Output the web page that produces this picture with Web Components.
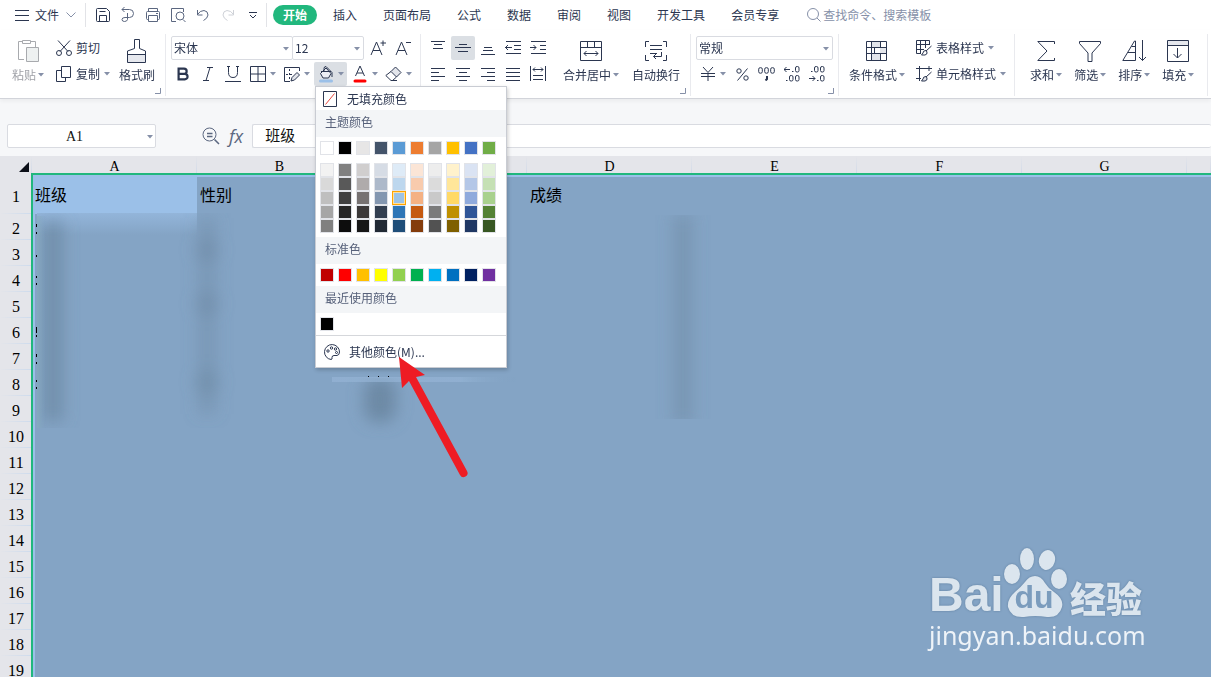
<!DOCTYPE html>
<html lang="zh-CN">
<head>
<meta charset="utf-8">
<meta name="viewport" content="width=device-width, initial-scale=1">
<title>表格</title>
<style>
  :root { --ink: #2b3650; --soft: #8690a8; --line: #d9dbe1; --green: #21b77d; --sel: #84a4c5; --cell: #9bc0e8; }
  body { margin: 0; font: 12px/16px "Noto Sans CJK SC", sans-serif; color: var(--ink); background: #f6f7f9; }
</style>
</head>
<body>
<sheet-app></sheet-app>
<script>
const define = (name, css, html) => customElements.define(name, class extends HTMLElement {
  connectedCallback() {
    if (this.shadowRoot) return;
    const root = this.attachShadow({ mode: 'open' });
    const tpl = document.createElement('template');
    tpl.innerHTML = `<style>*{box-sizing:border-box}button,input,select{font:inherit;color:inherit;background:none;border:0;margin:0;padding:0;border-radius:0;outline:0}${css}</style>` +
      (typeof html === 'function' ? html(this) : html);
    root.append(tpl.content.cloneNode(true));
  }
});

/* name: [width, height, markup] */
const ICONS = {
  menu: [14, 14, '<path d="M0 2.5H14M0 7.5H14M0 12.5H14"/>'],
  chevron: [10, 6, '<path stroke="#8690a8" d="M.5 .5L5 5L9.5 .5"/>'],
  save: [16, 16, '<path d="M1.500 2.500Q1.500 1.500 2.500 1.500H11.500L14.500 4.500V13.500Q14.500 14.500 13.500 14.500H2.500Q1.500 14.500 1.500 13.500ZM4.500 4.500H10.500M4.500 14.500V8.500H11.500V14.500"/>'],
  pdf: [16, 16, '<path stroke="#5b6780" d="M2 2.500H9.500A4 4 0 0 1 9.500 10.500H7.500M7.500 6V12.500Q7 14.500 4.500 14.500T2 12.500Q2 10.500 5 10.500H8M4.500 0L2 2.500L4.500 5"/>'],
  print: [16, 16, '<path stroke="#5b6780" d="M3.500 4.500V1.500H12.500V4.500M3.500 12.500H2.500Q1.500 12.500 1.500 11.500V5.500Q1.500 4.500 2.500 4.500H13.500Q14.500 4.500 14.500 5.500V11.500Q14.500 12.500 13.500 12.500H12.500M3.500 8.500H12.500V14.500H3.500ZM11 6.500H13"/>'],
  preview: [16, 16, '<path stroke="#5b6780" d="M6 14.500H1.500V1.500H13.500V5M13 12.500L15.500 15"/><circle stroke="#5b6780" cx="10" cy="9" r="4"/>'],
  undo: [16, 16, '<path stroke="#5b6780" d="M2.500 3V8H7.500M2.500 7.500Q5 3.500 9 3.500Q13 4 13 8Q12.500 11.500 8.500 13.500"/>'],
  redo: [16, 16, '<path stroke="#cfd2d8" d="M13.500 3V8H8.500M13.500 7.500Q11 3.500 7 3.500Q3 4 3 8Q3.500 11.500 7.500 13.500"/>'],
  more: [8, 8, '<path d="M0 1.500H8M1 4L4 7L7 4"/>'],
  search: [14, 14, '<circle stroke="#8690a8" cx="6" cy="6" r="5.500"/><path stroke="#8690a8" d="M10 10L13.500 13.500"/>'],
  paste: [22, 24, '<g stroke="#a8aaae"><path d="M7 20.500H1.500V2.500H5.500M14 2.500H18.500V8M5.500 1.500H13.500V4.500H5.500Z"/><path fill="#eef1f1" d="M9.500 8.500H21.500V22.500H9.500Z"/></g>'],
  cut: [16, 16, '<path d="M2 .5L12 11.500M14 .5L4 11.500"/><circle cx="3" cy="13" r="2.500"/><circle cx="13" cy="13" r="2.500"/>'],
  copy: [16, 16, '<path d="M5.500 .5H14.500V11.500H5.500ZM5.500 4.500H.5V15.500H9.500V11.500"/>'],
  brush: [20, 24, '<path fill="#e6e8ee" stroke="none" d="M1 15H18V23H1Z"/><path d="M7.500 .5H12.500V9.500L18.500 12V23.500H.5V12L7.500 9.500ZM.5 15.500H18.500"/>'],
  bold: [14, 16, '<path stroke-width="2.200" d="M2.600 2.600H8A2.600 2.600 0 0 1 8 7.900H2.600M2.600 7.900H8.800A2.700 2.700 0 0 1 8.800 13.400H2.600ZM2.600 1.500V14.500"/>'],
  italic: [12, 16, '<path d="M5 1.500H11M1 14.500H7M8 1.500L4 14.500"/>'],
  under: [16, 16, '<path d="M3.500 1V6.500Q3.500 11.500 8 11.500T12.500 6.500V1M0 15.500H16M2 .5H5M11 .5H14"/>'],
  border: [16, 16, '<path d="M.5 .5H15.500V15.500H.5ZM8 .5V15.500M.5 8H15.500"/>'],
  pen: [16, 16, '<path stroke-dasharray="2 2" d="M5.500 3V13M2 8.500H10"/><path d="M6 15.500H.5V1.500H15.500V5"/><path fill="#e3e5eb" d="M7 15L8 11.500L13 6.500L15.500 9L10.500 14Z"/>'],
  fill: [16, 18, '<path fill="#eceef4" d="M2.500 8.500L8 3L13 8.500L10.500 13H5Z"/><path d="M3 6.500H13M6 6V3.500Q6 1.500 8 1.500L14 7.500V12"/><path stroke="#9bc0e8" stroke-width="3" stroke-linecap="round" d="M2.500 16H13.500"/>'],
  color: [16, 18, '<path d="M3.500 11L8 1L12.500 11M5 8H11"/><path stroke="#f00" stroke-width="3" stroke-linecap="round" d="M3 16H13"/>'],
  eraser: [17, 16, '<path fill="#e3e5eb" d="M6 5.500L10.500 1L16 6.500L11.500 11Z"/><path d="M6 5.500L.8 9.500L6 14.500H7.500L11.500 11M6 14.500H12"/>'],
  aplus: [16, 16, '<path d="M1 15L6.500 2L12 15M3 10.500H10M13 .5V6M10.500 3H16"/>'],
  aminus: [16, 16, '<path d="M1 15L6.500 2L12 15M3 10.500H10M11 2.500H16"/>'],
  top: [14, 16, '<path d="M0 1.500H14M3 4.500H11M2 8.500H12"/>'],
  mid: [16, 16, '<path d="M4 4.500H12M0 7.500H16M3 11.500H13"/>'],
  bot: [14, 16, '<path d="M3 7.500H11M2 10.500H12M0 14.500H14"/>'],
  outd: [16, 16, '<path d="M1 1.500H16M9 5.500H16M9 9.500H16M1 13.500H16M0 7.500H7M3 5L.5 7.500L3 10"/>'],
  ind: [16, 16, '<path d="M1 1.500H16M10 5.500H16M10 9.500H16M1 13.500H16M0 7.500H6M3.500 5L6 7.500L3.500 10"/>'],
  left: [14, 14, '<path d="M0 1.500H14M0 5.500H8M0 9.500H14M0 13.500H8"/>'],
  center: [14, 14, '<path d="M0 1.500H14M3 5.500H11M0 9.500H14M3 13.500H11"/>'],
  right: [14, 14, '<path d="M0 1.500H14M6 5.500H14M0 9.500H14M6 13.500H14"/>'],
  just: [14, 14, '<path d="M0 1.500H14M0 5.500H14M0 9.500H14M0 13.500H14"/>'],
  dist: [16, 16, '<path d="M.5 0V15M15.500 0V15M3 3.500H13M5 1.500L3 3.500L5 5.500M11 1.500L13 3.500L11 5.500M3 9.500H13M3 13.500H13"/>'],
  merge: [22, 20, '<path d="M.5 .5H21.500V19.500H.5ZM.5 6.500H21.500M7.500 .5V6.500M14.500 .5V6.500M4 12.500H18M6.500 10L4 12.500L6.500 15M15.500 10L18 12.500L15.500 15"/>'],
  wrap: [22, 20, '<path d="M4 .5H.5V6M18 .5H21.500V6M4 19.500H.5V14M18 19.500H21.500V14M5 4.500H17M5 8.500H17M5 12.500H12M16.500 11V15.500H8.500M11 13L8.500 15.500L11 18"/>'],
  yen: [14, 14, '<path d="M2 0L7 5.500L12 0M0 6.500H14M0 9.500H14M7 6V14"/>'],
  percent: [13, 13, '<circle cx="3" cy="3" r="2.200"/><circle cx="10" cy="10" r="2.200"/><path d="M11.500 .5L1.500 12.500"/>'],
  comma: [18, 14, '<rect x=".7" y=".7" width="3.600" height="5.500" rx="1.500"/><rect x="6.700" y=".7" width="3.600" height="5.500" rx="1.500"/><rect x="12.700" y=".7" width="3.600" height="5.500" rx="1.500"/><path stroke-width="2" d="M9 9V12L7.500 13.500"/>'],
  inc: [16, 16, '<path d="M0 3.500H6M2.500 1L0 3.500L2.500 6M8 5.500H9.500M2 14.500H3.500"/><rect x="11.500" y=".5" width="3.500" height="5.500" rx="1.500"/><rect x="5.500" y="9.500" width="3.500" height="5.500" rx="1.500"/><rect x="11.500" y="9.500" width="3.500" height="5.500" rx="1.500"/>'],
  dec: [16, 16, '<path d="M0 12.500H6M3.500 10L6 12.500L3.500 15M8 14.500H9.500M2 5.500H3.500"/><rect x="11.500" y=".5" width="3.500" height="5.500" rx="1.500"/><rect x="5.500" y=".5" width="3.500" height="5.500" rx="1.500"/><rect x="11.500" y="9.500" width="3.500" height="5.500" rx="1.500"/>'],
  cond: [22, 20, '<path fill="#e3e5eb" stroke="none" d="M5 1H14V7H5ZM14 7H21V13H14ZM5 13H14V19H5Z"/><path d="M.5 .5H20.500V19.500H.5ZM.5 6.500H20.500M.5 12.500H20.500M5.500 .5V19.500M14.500 .5V6.500M8.500 6.500V12.500M14.500 12.500V19.500"/>'],
  table: [16, 16, '<path d="M5 13.500H.5V.5H13.500V5M.5 4.500H13.500M.5 9.500H8M4.500 .5V13.500M9.500 .5V8"/><path fill="#fff" d="M15.500 6L10 11M10 10.500Q7 10.500 7 13L5.500 15H9Q11.500 14.500 11 12Z"/>'],
  cellst: [16, 16, '<path d="M3.500 0V15M0 2.500H16M13 0V5M0 12.500H5"/><path fill="#e3e5eb" d="M15.500 6L10 11M10 10.500Q7 10.500 7 13L5.500 15H9Q11.500 14.500 11 12Z"/>'],
  sum: [18, 22, '<path d="M17.500 4V1.500H.8L10 11L.8 20.500H17.500V18"/>'],
  filter: [22, 22, '<path d="M.5 1.500H21.500V3.500L13 13V21.500H9V13L.5 3.500Z"/>'],
  sort: [24, 22, '<path d="M13.500 1V20.500H.8L12.500 1ZM6 12.500H13.500M9.500 6.500H13.500M20.500 0V20.500M17 17L20.500 20.500L24 17"/>'],
  fillin: [22, 22, '<path fill="#e6e8ee" stroke="none" d="M1 1H21V5H1Z"/><path d="M.5 .5H21.500V21.500H.5ZM.5 5.500H21.500M10.500 8V18M6.500 14L10.500 18L14.500 14"/>'],
  zoomout: [18, 18, '<g stroke="#5b6780"><circle cx="7.500" cy="7.500" r="6.500"/><path d="M12.500 12.500L17 17M5 6.500H10.500M5 9.500H10.500" stroke-width="1.500"/></g>'],
  nofill: [14, 16, '<path d="M.5 .5H13.500V15.500H.5Z"/><path stroke="#e8483f" d="M2.500 13.500L11.500 2.500"/>'],
  palette: [16, 16, '<path d="M7 15.500Q8.500 15.500 8 13.500Q8 11.500 10 11.500H13Q15.500 11 15.500 8A7.500 7.500 0 1 0 7 15.500Z"/><circle cx="4" cy="7" r="1.200"/><circle cx="7.500" cy="4" r="1.200"/><circle cx="11.500" cy="5" r="1.200"/><circle cx="12.500" cy="8.500" r="1"/>'],
  caret: [6, 4, '<path fill="#8690a8" stroke="none" d="M0 0H6L3 3.500Z"/>'],
  corner: [6, 6, '<path stroke="#8690a8" d="M5.500 0V5.500H0"/>']
};
define('ui-icon', ':host{display:block;flex:none}svg{display:block}', el => {
  const [w, h, body] = ICONS[el.getAttribute('name')];
  return `<svg width="${w}" height="${h}" viewBox="0 0 ${w} ${h}" fill="none" stroke="#2b3650" aria-hidden="true">${body}</svg>`;
});

define('tool-button', `
  :host{display:block;flex:none;position:relative}
  button{display:flex;align-items:center;justify-content:center;gap:4px;height:24px;min-width:24px;border-radius:2px;white-space:nowrap}
  :host([drop]:not([label])) button{width:33px}
  :host([label]) button{justify-content:flex-start}
  :host([active]) button{background:#dbdfe4}
  :host([big]) button{height:50px;flex-direction:column;justify-content:flex-end;gap:1px;padding-bottom:3px}
  .pic{display:grid;place-items:center;min-width:16px}
  :host([big]) .pic{height:30px}
  .txt{display:flex;align-items:center;gap:4px}
  :host([big]) .txt{gap:2px}
  :host([muted]){color:#a0a2a8}
`, el => {
  const l = el.getAttribute('label'), d = el.hasAttribute('drop');
  return `<button type="button" aria-label="${l || el.getAttribute('icon')}"><span class="pic"><ui-icon name="${el.getAttribute('icon')}"></ui-icon></span>` +
    (l || d ? `<span class="txt">${l ? `<span>${l}</span>` : ''}${d ? '<ui-icon name="caret"></ui-icon>' : ''}</span>` : '') + '</button><slot></slot>';
});

define('tool-select', `
  :host{display:block;position:relative;height:24px}
  select{display:block;appearance:none;width:100%;height:24px;line-height:16px;padding:0 16px 0 2px;border:1px solid var(--line);border-radius:2px;background:#fff}
  ui-icon{position:absolute;right:4px;top:11px;pointer-events:none}
`, el => `<select aria-label="${el.getAttribute('name')}"><option>${el.getAttribute('value')}</option></select><ui-icon name="caret"></ui-icon>`);

define('ribbon-group', `
  :host{display:flex;flex:none;position:relative;margin:4px 0 2px;padding:2px 5px 0;border-right:1px solid #e9eaee}
  button{position:absolute;right:4px;bottom:2px;width:6px;height:6px}
`, el => `<slot></slot>${el.hasAttribute('corner') ? '<button type="button" aria-label="更多设置"><ui-icon name="corner"></ui-icon></button>' : ''}`);

const tb = (icon, opts = '') => `<tool-button icon="${icon}" ${opts}></tool-button>`;

define('menu-bar', `
  :host{display:flex;align-items:center;height:30px;background:#fff;overflow:hidden}
  button{display:flex;align-items:center;justify-content:center;height:20px;white-space:nowrap;flex:none}
  .file{padding:0 9px 0 15px;gap:7px}
  .file span{margin-left:-1px}
  .sep{flex:none;width:1px;height:24px;background:#e2e3e7}
  .quick{display:flex;gap:1px;padding:0 1px 0 5px}
  nav{display:flex;padding-left:6px}
  nav button{padding:0 13px}
  nav .on{width:44px;margin-right:3px;padding:0;border-radius:10px;background:var(--green);color:#fff;font-weight:700}
  label{display:flex;align-items:center;gap:2px;margin-left:15px}
  input{width:140px;height:16px;line-height:16px}
  input::placeholder{color:var(--soft);opacity:1}
`, `<button class="file" type="button"><ui-icon name="menu"></ui-icon><span>文件</span><ui-icon name="chevron"></ui-icon></button>
  <span class="sep"></span>
  <div class="quick">${['save', 'pdf', 'print', 'preview', 'undo', 'redo', 'more'].map(n => tb(n)).join('')}</div>
  <span class="sep"></span>
  <nav><button class="on" type="button">开始</button>${['插入', '页面布局', '公式', '数据', '审阅', '视图', '开发工具', '会员专享'].map(t => `<button type="button">${t}</button>`).join('')}</nav>
  <label><ui-icon name="search"></ui-icon><input type="text" aria-label="查找命令" placeholder="查找命令、搜索模板"></label>`);

define('ribbon-bar', `
  :host{display:flex;position:relative;z-index:2;height:69px;background:#fff;border-bottom:1px solid #d2d4da;box-shadow:0 2px 4px #0000000d}
  .col{display:flex;flex-direction:column;gap:2px;flex:none}
  .row{display:flex;gap:1px;height:24px}
  .clip{padding:2px 10px 0 12px;gap:12px}
  .clip .col + *{margin-left:-3px}
  .face{width:122px}.size{width:72px;margin:0 1px 0 -2px}
  .align{gap:13px;padding-right:10px}
  .num{width:137px}
  .cond{padding:2px 8px 0 10px;gap:11px}
  .edit{padding:2px 13px 0 15px;gap:12px}
`, `<ribbon-group class="clip" corner>${tb('paste', 'big muted drop label="粘贴"')}
    <div class="col">${tb('cut', 'label="剪切"')}${tb('copy', 'drop label="复制"')}</div>
    ${tb('brush', 'big label="格式刷"')}</ribbon-group>
  <ribbon-group><div class="col">
    <div class="row"><tool-select class="face" name="字体" value="宋体"></tool-select><tool-select class="size" name="字号" value="12"></tool-select>${tb('aplus')}${tb('aminus')}</div>
    <div class="row">${tb('bold')}${tb('italic')}${tb('under')}${tb('border', 'drop')}${tb('pen', 'drop')}<tool-button icon="fill" drop active><color-menu></color-menu></tool-button>${tb('color', 'drop')}${tb('eraser', 'drop')}</div>
  </div></ribbon-group>
  <ribbon-group class="align" corner><div class="col">
    <div class="row">${tb('top')}${tb('mid', 'active')}${tb('bot')}${tb('outd')}${tb('ind')}</div>
    <div class="row">${tb('left')}${tb('center')}${tb('right')}${tb('just')}${tb('dist')}</div>
  </div>${tb('merge', 'big drop label="合并居中"')}${tb('wrap', 'big label="自动换行"')}</ribbon-group>
  <ribbon-group corner><div class="col">
    <tool-select class="num" name="数字格式" value="常规"></tool-select>
    <div class="row">${tb('yen', 'drop')}${tb('percent')}${tb('comma')}${tb('inc')}${tb('dec')}</div>
  </div></ribbon-group>
  <ribbon-group class="cond">${tb('cond', 'big drop label="条件格式"')}
    <div class="col">${tb('table', 'drop label="表格样式"')}${tb('cellst', 'drop label="单元格样式"')}</div></ribbon-group>
  <ribbon-group class="edit">${tb('sum', 'big drop label="求和"')}${tb('filter', 'big drop label="筛选"')}${tb('sort', 'big drop label="排序"')}${tb('fillin', 'big drop label="填充"')}</ribbon-group>`);

define('color-swatches', `
  :host{display:grid;grid-template-columns:repeat(10,14px);column-gap:4px}
  button{width:14px;height:14px;border:1px solid #e1e3e8}
  .on{border-color:#ffa500;box-shadow:inset 0 0 0 1px #ffe0a0}
`, el => el.getAttribute('colors').split(' ').map(c => `<button type="button" aria-label="#${c}" style="background:#${c}"${c === '9dc3e6' ? ' class="on"' : ''}></button>`).join(''));

define('color-menu', `
  :host{position:absolute;left:1px;top:24px;width:192px;z-index:5;background:#fff;border:1px solid #c9ccd3;box-shadow:1px 2px 4px #0003;text-align:left}
  .item{display:flex;align-items:center;gap:10px;width:100%;height:23px;padding-left:7px}
  .other{height:32px;gap:9px;padding-left:8px;border-top:1px solid #d5d7db}
  h3{margin:0;padding:4px 9px 7px;background:#f3f5f7;color:#57617a;font:inherit}
  .set{display:grid;gap:8px;padding:4px}
`, `<button class="item" type="button"><ui-icon name="nofill"></ui-icon><span>无填充颜色</span></button>
  <h3>主题颜色</h3>
  <div class="set"><color-swatches colors="ffffff 000000 e7e6e6 44546a 5b9bd5 ed7d31 a5a5a5 ffc000 4472c4 70ad47"></color-swatches>
  <color-swatches colors="f2f2f2 808080 d0cece d6dce5 deebf7 fbe5d6 ededed fff2cc dae3f3 e2f0d9 d9d9d9 595959 afabab adb9ca bdd7ee f8cbad dbdbdb ffe699 b4c7e7 c5e0b4 bfbfbf 404040 767171 8497b0 9dc3e6 f4b183 c9c9c9 ffd966 8faadc a9d18e a6a6a6 262626 3b3838 333f50 2e75b6 c55a11 7b7b7b bf9000 2f5597 548235 808080 0d0d0d 171717 222a35 1f4e79 843c0c 525252 7f6000 203864 385723"></color-swatches></div>
  <h3>标准色</h3>
  <div class="set"><color-swatches colors="c00000 ff0000 ffc000 ffff00 92d050 00b050 00b0f0 0070c0 002060 7030a0"></color-swatches></div>
  <h3>最近使用颜色</h3>
  <div class="set"><color-swatches colors="000000"></color-swatches></div>
  <button class="item other" type="button"><ui-icon name="palette"></ui-icon><span>其他颜色(M)...</span></button>`);

define('formula-bar', `
  :host{display:flex;align-items:center;height:57px;padding:17px 0 0 7px;color:#111}
  label{position:relative;width:149px;margin-right:46px}
  input{display:block;width:100%;height:24px;border:1px solid var(--line);border-radius:2px;background:#fff}
  label input{padding:2px 14px 0 0;text-align:center;font:14px/20px "Liberation Serif",serif}
  label ui-icon{position:absolute;right:3px;top:11px}
  button{font:italic 18px/22px "Open Sans",sans-serif;color:#5b6780;margin:0 9px 0 9px}
  .text{flex:1;padding:0 12px 3px;font-size:15px;border-right:0}
`, `<label><input aria-label="名称框" value="A1"><ui-icon name="caret"></ui-icon></label>
  <ui-icon name="zoomout"></ui-icon><button type="button">fx</button>
  <input class="text" aria-label="编辑栏" value="班级">`);

const heads = ['A', 'B', 'C', 'D', 'E', 'F', 'G', ''];
const first = ['班级', '性别', '', '成绩', '', '', '', ''];
define('sheet-grid', `
  :host{display:block;flex:1;min-height:0;position:relative;overflow:hidden;background:var(--sel)}
  table{table-layout:fixed;width:100%;border-collapse:separate;border-spacing:0;color:#000}
  .n{width:32px}.c{width:165px}
  th,td{padding:0;font-weight:400;text-align:left}
  th{background:#e4e5ea;text-align:center;font:16px/16px "Liberation Serif",serif}
  thead th{height:19px;font-size:14px;padding-top:2px;background:linear-gradient(#e4e5ea,#d0d9e8) right/1px 100% no-repeat #e4e5ea}
  tbody th{height:26px;padding-top:4px;background:linear-gradient(90deg,#e4e5ea,#cddbed) bottom/100% 1px no-repeat #e4e5ea}
  tbody tr:first-child>*{height:39px}
  td{font-size:16px;line-height:20px;padding:0 0 2px 3px}
  .now{background:var(--cell)}
  thead th:first-child svg{display:block;margin-left:19px}
  .sel{position:absolute;inset:17px -9px -9px 31px;border:2px solid var(--green);box-shadow:inset 0 0 0 2px var(--cell);pointer-events:none}
  .haze{position:absolute;left:0;top:0;pointer-events:none}
`, `<table><colgroup><col class="n">${'<col class="c">'.repeat(7)}<col></colgroup>
  <thead><tr><th><svg width="10" height="10" aria-hidden="true"><path d="M10 0V10H0Z" fill="#0b0e18"/></svg></th>${heads.map(h => `<th>${h}</th>`).join('')}</tr></thead>
  <tbody>${Array.from({ length: 19 }, (_, r) => `<tr><th>${r + 1}</th>${first.map((t, c) => `<td${r + c ? '' : ' class="now"'}>${r ? '' : t}</td>`).join('')}</tr>`).join('')}</tbody></table>
  <svg class="haze" width="760" height="300" aria-hidden="true">
    <defs><filter id="s" x="-50%" y="-50%" width="200%" height="200%"><feGaussianBlur stdDeviation="8"/></filter>
    <linearGradient id="g" x2="0" y2="1"><stop stop-color="#93b5da"/><stop offset="1" stop-color="#84a4c5"/></linearGradient>
    <linearGradient id="e"><stop stop-color="#88b0bd"/><stop offset="1" stop-color="#84a4c5" stop-opacity="0"/></linearGradient>
    <linearGradient id="b"><stop stop-color="#98b7d8" stop-opacity=".6"/><stop offset=".7" stop-color="#98b7d8" stop-opacity=".6"/><stop offset="1" stop-color="#84a4c5" stop-opacity="0"/></linearGradient>
    <clipPath id="c"><path d="M37 57H330V272H37ZM332 222H520V300H332ZM537 59H760V263H537Z"/></clipPath></defs>
    <rect x="37" y="57" width="160" height="22" fill="url(#g)"/>
    <g clip-path="url(#c)"><g filter="url(#s)" fill="#66829b">
      <rect x="43" y="65" width="20" height="200" opacity=".6"/>
      <rect x="198" y="62" width="18" height="196" opacity=".35"/><circle cx="207" cy="94" r="12" opacity=".35"/><circle cx="207" cy="148" r="12" opacity=".35"/><circle cx="207" cy="226" r="12" opacity=".4"/>
      <rect x="364" y="222" width="32" height="44" rx="12" opacity=".75"/>
      <rect x="673" y="59" width="20" height="210" opacity=".4"/>
    </g></g>
    <rect x="37" y="60" width="9" height="212" fill="url(#e)" opacity=".6"/>
    <rect x="332" y="221" width="184" height="5" fill="url(#b)"/>
    <path fill="#000" d="M36 68h1v3h-1zM36 76h1v2h-1zM36 99h1v2h-1zM36 120h1v2h-1zM36 127h1v2h-1zM36 171h1v6h-1zM36 179h1v2h-1zM36 198h1v3h-1zM36 206h1v2h-1zM36 224h1v2h-1zM36 231h1v2h-1zM368 220h1v1h-1zM378 220h1v1h-1zM388 220h1v1h-1z"/>
  </svg>
  <div class="sel"></div><site-mark></site-mark>`);

define('site-mark', `
  :host{position:absolute;right:65px;bottom:24px;width:217px;color:#eef3f8}
  .logo{display:flex;height:70px;align-items:flex-end;color:#dbe5ee;filter:drop-shadow(0 0 1px #5f7f9f)}
  .bai{font:700 48px/44px "Liberation Sans",sans-serif;width:75px}
  .paw{position:relative;width:60px;height:70px;flex:none}
  .paw svg{display:block;overflow:visible}
  .paw span{position:absolute;left:0;right:0;top:32px;text-align:center;font:700 32px/36px "Liberation Sans",sans-serif;color:#7b9cbd}
  .jy{font-weight:900;font-size:36px;line-height:40px;margin-left:6px;white-space:nowrap}
  .url{font:25px/36px "Noto Sans",sans-serif;white-space:nowrap}
`, `<div class="logo"><span class="bai">Bai</span><div class="paw"><svg width="60" height="70" fill="currentColor" aria-hidden="true"><ellipse cx="8" cy="27" rx="8" ry="10"/><ellipse cx="23" cy="12" rx="7" ry="11"/><ellipse cx="43" cy="13" rx="8" ry="10" transform="rotate(15 43 13)"/><ellipse cx="55" cy="32" rx="8" ry="10"/><path d="M31 29Q37 29 41 36Q44 41 50 45Q60 52 58 60Q55 71 43 70Q31 68 20 70Q7 71 4 60Q3 52 11 45Q17 40 21 35Q25 29 31 29Z"/></svg><span>du</span></div><span class="jy">经验</span></div><div class="url">jingyan.baidu.com</div>`);

define('pointer-arrow', ':host{position:absolute;left:396px;top:354px;z-index:9;pointer-events:none}svg{display:block}',
  '<svg width="74" height="126" fill="#ee1c24" aria-hidden="true"><path d="M3 3L29 21L20 23L71 117A4 4 0 0 1 64 121L13 27L6 34Z"/></svg>');

define('sheet-app', ':host{display:flex;flex-direction:column;height:100vh;position:relative;overflow:hidden}',
  '<menu-bar></menu-bar><ribbon-bar></ribbon-bar><formula-bar></formula-bar><sheet-grid></sheet-grid><pointer-arrow></pointer-arrow>');
</script>
</body>
</html>
